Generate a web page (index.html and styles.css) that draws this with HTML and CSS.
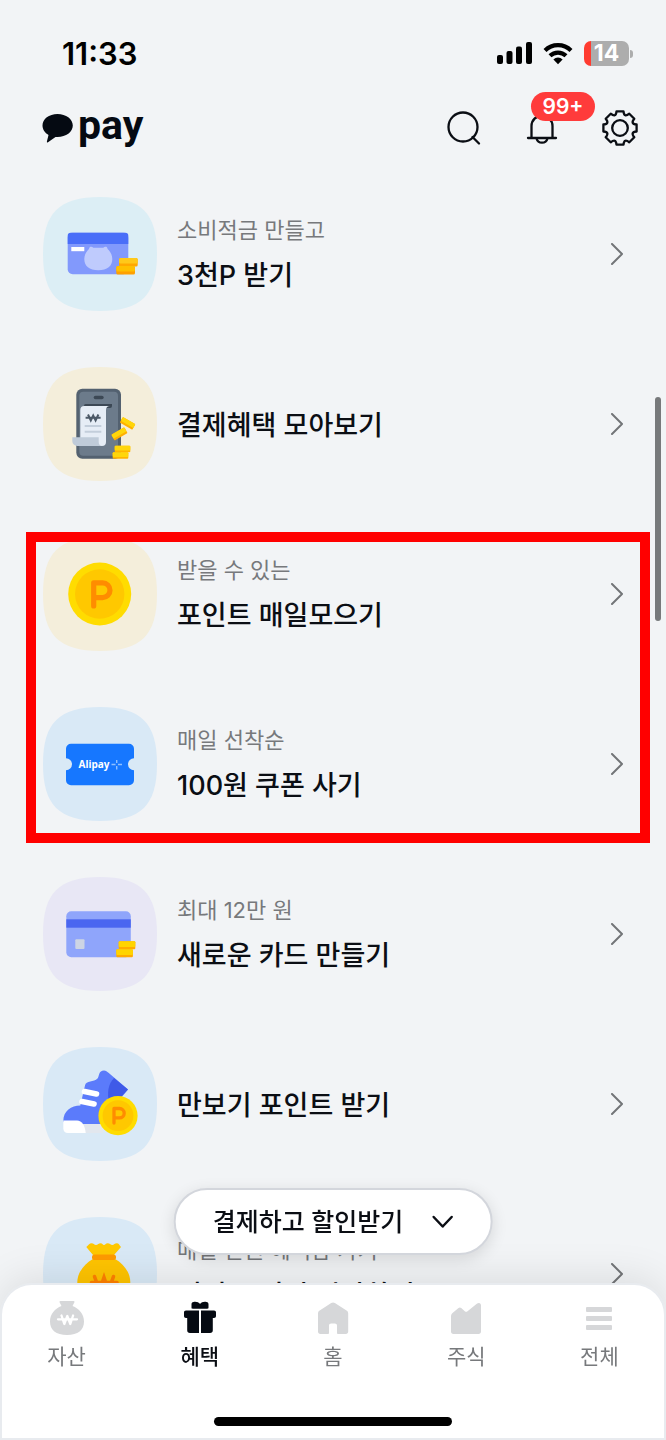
FILE: index.html
```html
<!DOCTYPE html>
<html lang="ko">
<head>
  <meta charset="utf-8">
  <meta name="viewport" content="width=device-width, initial-scale=1.0">
  <title>pay 혜택</title>
  <link rel="stylesheet" href="styles.css">
</head>
<body>
  <!-- shared shapes -->
  <svg class="defs" width="0" height="0" aria-hidden="true">
    <symbol id="tile" viewBox="0 0 114 114">
      <path d="M0 57C0 16 16 0 57 0s57 16 57 57-16 57-57 57S0 98 0 57z"/>
    </symbol>
    <symbol id="next" viewBox="0 0 14 22">
      <path d="M2 1l10 10L2 21" fill="none" stroke="#737578" stroke-width="2" stroke-linecap="round" stroke-linejoin="round"/>
    </symbol>
  </svg>

  <div class="status">
    <span class="time">11:33</span>
    <div class="status-icons">
      <svg width="35" height="24" viewBox="0 0 35 24">
        <rect x="0" y="14" width="6" height="9" rx="2"/>
        <rect x="9.500" y="10" width="6" height="13" rx="2"/>
        <rect x="19" y="5.500" width="6" height="17.500" rx="2"/>
        <rect x="29" y="1" width="6" height="22" rx="2"/>
      </svg>
      <svg width="30" height="24" viewBox="0 0 30 24">
        <g fill="none" stroke="#000" stroke-width="4.2">
          <path d="M2 9.400a18.500 18.500 0 0 1 26 0"/>
          <path d="M7 14.800a11.500 11.500 0 0 1 16 0"/>
        </g>
        <path d="M15 23.200l-4.600-4.800a6.600 6.600 0 0 1 9.200 0z"/>
      </svg>
      <span class="battery">14</span>
    </div>
  </div>

  <header class="header">
    <a class="logo" href="#">
      <svg width="31" height="31" viewBox="0 0 31 31">
        <path d="M15.500 1C7 1 .5 6 .5 12.500c0 4 2.400 7.400 6 9.400L4.900 28.600c-.2.900.4 1.200 1.100.7l7.500-5.400 2 .1c8.500 0 15.300-5 15.300-11.500S24 1 15.500 1z" fill="#050a12"/>
      </svg>
      <span>pay</span>
    </a>
    <div class="actions">
      <button type="button" aria-label="검색">
        <svg width="40" height="40" viewBox="0 0 40 40">
          <circle cx="19" cy="19" r="14.500"/>
          <path d="M28.500 29l6.500 6.500"/>
        </svg>
      </button>
      <button type="button" aria-label="알림">
        <svg width="40" height="40" viewBox="0 0 40 40">
          <path d="M6 30h28M9.500 30V18a10.500 10.500 0 0 1 21 0v12M14.500 30.500a5.700 5.700 0 0 0 11 0"/>
        </svg>
        <span class="badge">99+</span>
      </button>
      <button type="button" aria-label="설정">
        <svg width="40" height="40" viewBox="0 0 40 40">
          <path d="M16.500 3.400h7Q24.100 10 29.300 5.700l5 5Q30 15.900 36.600 16.500v7Q30 24.100 34.300 29.300l-5 5Q24.100 30 23.500 36.600h-7Q15.900 30 10.700 34.300l-5-5Q10 24.100 3.400 23.500v-7Q10 15.900 5.700 10.700l5-5Q15.900 10 16.500 3.400z"/>
          <circle cx="20" cy="20" r="7.800"/>
        </svg>
      </button>
    </div>
  </header>

  <main class="list">
    <a class="item" href="#">
      <svg class="icon" viewBox="0 0 114 114">
        <use href="#tile" fill="#dceef5"/>
        <rect x="24.700" y="35.700" width="60.600" height="41.600" rx="5" fill="#8299fc"/>
        <path d="M24.700 47v-8.300a3 3 0 0 1 3-3h54.600a3 3 0 0 1 3 3V47z" fill="#4a6ef8"/>
        <rect x="28.300" y="50" width="13" height="4.200" fill="#fff"/>
        <path d="M46 52c.3-3 3-2.600 4.300-1.300h10c1.300-1.300 4-1.700 4.300 1.300 2.800 2.600 4.700 6 4.700 10 0 7-5 11.300-14 11.300S41.300 69 41.300 62c0-4 1.900-7.400 4.700-10z" fill="#bfcbfd"/>
        <rect x="76" y="61" width="18.700" height="8.500" rx="1.500" fill="#ffa800"/>
        <rect x="76" y="61" width="18.700" height="5.500" rx="1.500" fill="#ffc91a"/>
        <rect x="73.300" y="69" width="18.700" height="8.500" rx="1.500" fill="#ffa000"/>
        <rect x="73.300" y="69" width="18.700" height="5.500" rx="1.500" fill="#ffc000"/>
      </svg>
      <div class="text">
        <span class="sub">소비적금 만들고</span>
        <strong class="title">3천P 받기</strong>
      </div>
      <svg class="next"><use href="#next"/></svg>
    </a>

    <a class="item" href="#">
      <svg class="icon" viewBox="0 0 114 114">
        <use href="#tile" fill="#f4eedb"/>
        <rect x="33.300" y="21.700" width="44.700" height="70" rx="6" fill="#536170"/>
        <rect x="36.300" y="24.700" width="38.700" height="64" rx="4" fill="#6c7b8b"/>
        <rect x="50.700" y="28.700" width="10" height="3.600" rx="1.800" fill="#3c4855"/>
        <path d="M41 38.500a1.600 1.600 0 0 1 1.600-1.600H69v2a2 2 0 0 1-2 2H42z" fill="#3c4855"/>
        <path d="M37.300 71V43a4 4 0 0 1 4-4H67c-2.500 0-4 1.500-4 4v32a4 4 0 0 1-4 4H37.300z" fill="#e6edf6"/>
        <path d="M29.300 70.300h26.400V75a4 4 0 0 0 4 4H34.300a5 5 0 0 1-5-5z" fill="#bfcbd9"/>
        <path d="M45 47.500l2.800 6 2.400-5 2.400 5 2.800-6M42.600 50.700h15" fill="none" stroke="#4c5967" stroke-width="2"/>
        <path d="M41.700 59h16.600M41.700 64.700h16.600" stroke="#c3cedb" stroke-width="2"/>
        <g transform="rotate(30 84.500 56)">
          <rect x="77.500" y="53" width="14.500" height="6.500" rx="1" fill="#ffb000"/>
          <rect x="77.500" y="53" width="14.500" height="4.400" rx="1" fill="#ffd60a"/>
        </g>
        <g transform="rotate(-30 76.500 67)">
          <rect x="69" y="63.500" width="15" height="6.800" rx="1" fill="#ffb000"/>
          <rect x="69" y="63.500" width="15" height="4.600" rx="1" fill="#ffd60a"/>
        </g>
        <rect x="71.700" y="78.700" width="15.600" height="6.600" rx="1" fill="#ffb400"/>
        <rect x="71.700" y="78.700" width="15.600" height="4.800" rx="1" fill="#ffd60a"/>
        <rect x="69.700" y="85.300" width="15.600" height="6.400" rx="1" fill="#ffb400"/>
        <rect x="69.700" y="85.300" width="15.600" height="4.800" rx="1" fill="#ffd60a"/>
      </svg>
      <div class="text">
        <strong class="title">결제혜택 모아보기</strong>
      </div>
      <svg class="next"><use href="#next"/></svg>
    </a>

    <div class="highlight">
      <a class="item" href="#">
        <svg class="icon" viewBox="0 0 114 114">
          <use href="#tile" fill="#f4eedb"/>
          <circle cx="56.700" cy="57" r="31.500" fill="#ffdc00"/>
          <circle cx="56.700" cy="57" r="24.700" fill="#ffc800"/>
          <path d="M50.700 69V45.800h8.900a7.400 7.400 0 0 1 0 14.800h-8.900" fill="none" stroke="#ff8c00" stroke-width="5.200" stroke-linecap="round" stroke-linejoin="round"/>
        </svg>
        <div class="text">
          <span class="sub">받을 수 있는</span>
          <strong class="title">포인트 매일모으기</strong>
        </div>
        <svg class="next"><use href="#next"/></svg>
      </a>

      <a class="item" href="#">
        <svg class="icon" viewBox="0 0 114 114">
          <use href="#tile" fill="#d9e9f6"/>
          <path d="M28 36.700h58a5 5 0 0 1 5 5v9.600a6 6 0 0 0 0 12v10a5 5 0 0 1-5 5H28a5 5 0 0 1-5-5v-10a6 6 0 0 0 0-12v-9.600a5 5 0 0 1 5-5z" fill="#1677ff"/>
          <text class="brand" x="35.500" y="61" fill="#fff">Alipay</text>
          <path d="M68.500 57.500h4M75 57.500h4M73.700 53v3M73.700 59v3.500" stroke="#8fc0ff" stroke-width="1.400"/>
        </svg>
        <div class="text">
          <span class="sub">매일 선착순</span>
          <strong class="title">100원 쿠폰 사기</strong>
        </div>
        <svg class="next"><use href="#next"/></svg>
      </a>
    </div>

    <a class="item" href="#">
      <svg class="icon" viewBox="0 0 114 114">
        <use href="#tile" fill="#e8e7f5"/>
        <rect x="23.300" y="34.300" width="64.500" height="46" rx="5" fill="#8fa5fb"/>
        <rect x="23.300" y="42.300" width="64.500" height="8.400" fill="#4a66f0"/>
        <rect x="32.300" y="62.300" width="9.200" height="9.600" rx="1" fill="#cdd5e4"/>
        <rect x="75.700" y="64.300" width="16.600" height="8" rx="1" fill="#ffab00"/>
        <rect x="75.700" y="64.300" width="16.600" height="5.600" rx="1" fill="#ffd400"/>
        <rect x="73.300" y="72.300" width="16.600" height="8" rx="1" fill="#ffab00"/>
        <rect x="73.300" y="72.300" width="16.600" height="5.600" rx="1" fill="#ffd400"/>
      </svg>
      <div class="text">
        <span class="sub">최대 12만 원</span>
        <strong class="title">새로운 카드 만들기</strong>
      </div>
      <svg class="next"><use href="#next"/></svg>
    </a>

    <a class="item" href="#">
      <svg class="icon" viewBox="0 0 114 114">
        <use href="#tile" fill="#d9e9f6"/>
        <path d="M38 77h22v9H38z" fill="#e2e7ee"/>
        <path d="M20.300 74c0-10 8-15.500 17-15.500L42 38.500c1-5.500 9-3 12.500-7 2-2.500 1-8 6.500-8 2 0 3 1 4.500 2.300L85 42.500 72 58 60 77H40L20.300 75z" fill="#5b7bfb"/>
        <path d="M71 31l14 11.500L77 51l-11 5c-2-10-1-19 5-25z" fill="#3f5ae8"/>
        <path d="M20.300 73.500H34c5 0 8 5 8.700 12.500H25c-3 0-4.700-1.700-4.700-4.700z" fill="#fff"/>
        <path d="M41.500 44.500l12 2.500M39 54.500l12 2.500" stroke="#fff" stroke-width="5.600" stroke-linecap="round"/>
        <circle cx="75" cy="68.700" r="19.600" fill="#ffdc00"/>
        <circle cx="75" cy="68.700" r="15.400" fill="#ffc800"/>
        <path d="M71 76V61.500h5.500a4.700 4.700 0 0 1 0 9.400H71" fill="none" stroke="#ff8c00" stroke-width="3.300" stroke-linecap="round" stroke-linejoin="round"/>
      </svg>
      <div class="text">
        <strong class="title">만보기 포인트 받기</strong>
      </div>
      <svg class="next"><use href="#next"/></svg>
    </a>

    <a class="item" href="#">
      <svg class="icon" viewBox="0 0 114 114">
        <use href="#tile" fill="#d9e9f6"/>
        <path d="M43.300 30c2-1.500 3-3.700 5.300-3.700 2 0 2.600 1.700 4.400 1.700s2.700-1.700 4.600-1.700S59.500 28 61 28s1.700-1.700 3.700-1.700S67.500 28 69.300 28s2.400-1.700 4.400-1.700c2.300 0 2.700 2.200 4.300 3.700L71 38H50z" fill="#ffc800"/>
        <path d="M50 42h22c9 5 15.300 14 15.300 23C87.300 82 78 92 61 92S34.300 82 34.300 65C34.300 56 41 47 50 42z" fill="#ffc400"/>
        <rect x="49" y="37.500" width="24" height="5.500" rx="2.500" fill="#ff9a00"/>
        <path d="M51.500 59.500l5 14 4.500-13 4.500 13 5-14M48.500 65.500h25.500" fill="none" stroke="#ff8000" stroke-width="3.600" stroke-linecap="round"/>
      </svg>
      <div class="text">
        <span class="sub">매일 만원 혜택함 가기</span>
        <strong class="title">머니 굴리기 시작하기</strong>
      </div>
      <svg class="next"><use href="#next"/></svg>
    </a>
  </main>

  <div class="scrollbar"></div>

  <button class="float-btn" type="button">
    결제하고 할인받기
    <svg width="22" height="14" viewBox="0 0 22 14">
      <path d="M2 2l9 9.500L20 2" fill="none" stroke="#0b0e14" stroke-width="2.500" stroke-linecap="round" stroke-linejoin="round"/>
    </svg>
  </button>

  <nav class="tabs">
    <div class="tab-list">
      <a class="tab" href="#">
        <svg width="34" height="34" viewBox="0 0 34 34">
          <path d="M10.500 0h13c1 0 1.300.8.800 1.600L22.500 5C29 7.500 34 13 34 20.500 34 29 28 34 17 34S0 29 0 20.500C0 13 5 7.500 11.500 5L9.700 1.600C9.200.8 9.500 0 10.500 0z"/>
          <path d="M11.500 14.500l2.800 8.500 3-8 3 8 2.800-8.500M8 18.300h19" fill="none" stroke="#fff" stroke-width="2.300" stroke-linecap="round" stroke-linejoin="round"/>
        </svg>
        자산
      </a>
      <a class="tab active" href="#">
        <svg width="34" height="34" viewBox="0 0 34 34">
          <path d="M10.500 1c3-.6 5 .4 6.500 2 1.500-1.600 3.500-2.600 6.500-2 1.500.3 2 1 2 2.500v3c0 .8-.4 1.200-1.200 1.200H9.700c-.8 0-1.200-.4-1.200-1.200v-3c0-1.500.5-2.200 2-2.500z"/>
          <path d="M3 9.500h13V32H7c-1.800 0-2.800-1-2.800-2.800V17H3c-1.300 0-2-.7-2-2v-3.500c0-1.300.7-2 2-2zM18 9.500h13c1.300 0 2 .7 2 2V15c0 1.300-.7 2-2 2h-1.200v12.200c0 1.800-1 2.800-2.800 2.800h-9z"/>
        </svg>
        혜택
      </a>
      <a class="tab" href="#">
        <svg width="34" height="34" viewBox="0 0 34 34">
          <path d="M15.200 2c1.300-.8 2.400-.8 3.700 0L30.500 9.500c1.200.8 1.700 1.700 1.700 3.100v18c0 1.500-.9 2.400-2.400 2.400h-7.600c-.8 0-1.200-.4-1.200-1.200v-7c0-1.400-.8-2.200-2.200-2.200h-3.600c-1.400 0-2.200.8-2.200 2.200v7c0 .8-.4 1.200-1.200 1.200H4.400C2.900 33 2 32.100 2 30.600v-18c0-1.400.5-2.300 1.700-3.100z"/>
        </svg>
        홈
      </a>
      <a class="tab" href="#">
        <svg width="34" height="34" viewBox="0 0 34 34">
          <path d="M3.500 12l6-5c.9-.7 1.800-.7 2.700 0l3.600 3.200c1 .8 1.800.8 2.700 0l9.300-7.400C30 1.200 32 2.100 32 4.500v26c0 1.600-.9 2.500-2.500 2.500h-25C2.900 33 2 32.100 2 30.500v-15C2 14 2.500 12.900 3.500 12z"/>
        </svg>
        주식
      </a>
      <a class="tab" href="#">
        <svg width="34" height="34" viewBox="0 0 34 34">
          <rect x="4" y="6" width="26" height="5" rx="1"/>
          <rect x="4" y="15" width="26" height="5" rx="1"/>
          <rect x="4" y="24" width="26" height="5" rx="1"/>
        </svg>
        전체
      </a>
    </div>
    <div class="home-bar"></div>
  </nav>
</body>
</html>
```
FILE: styles.css
```css
*, *:before, *:after {
  box-sizing: border-box;
}
body {
  position: relative;
  margin: 0;
  height: 100vh;
  overflow: hidden;
  background: #f2f4f6;
  color: #0b0e14;
  font-family: Inter, "Noto Sans CJK KR", sans-serif;
}
a {
  color: inherit;
  text-decoration: none;
}
button {
  padding: 0;
  border: none;
  background: none;
  color: inherit;
  font-family: inherit;
  cursor: pointer;
}
svg {
  display: block;
  flex: none;
}
.defs {
  position: absolute;
}

/* status bar */
.status {
  display: flex;
  align-items: center;
  justify-content: space-between;
  height: 92px;
  padding: 14px 33px 0 62px;
  color: #000;
}
.time {
  font-size: 31px;
  font-weight: 600;
}
.status-icons {
  display: flex;
  align-items: center;
  gap: 11px;
}
.battery {
  position: relative;
  width: 45px;
  height: 25px;
  margin-right: 4px;
  border-radius: 7px;
  background: linear-gradient(to right, #ff3b30 7px, #adadad 7px);
  color: #fff;
  font-size: 23px;
  font-weight: 700;
  line-height: 25px;
  text-align: center;
}
.battery:after {
  content: "";
  position: absolute;
  top: 9px;
  right: -4px;
  width: 3px;
  height: 8px;
  border-radius: 0 3px 3px 0;
  background: #adadad;
}

/* header */
.header {
  display: flex;
  align-items: center;
  justify-content: space-between;
  height: 70px;
  padding: 2px 26px 0 42px;
}
.logo {
  display: flex;
  align-items: center;
  gap: 5px;
  color: #050a12;
  font-family: Roboto, sans-serif;
  font-size: 41px;
  font-weight: 700;
  line-height: 48px;
}
.logo span {
  padding-bottom: 6px;
}
.actions {
  display: flex;
  gap: 38px;
}
.actions button {
  position: relative;
  width: 40px;
  height: 40px;
}
.actions svg {
  fill: none;
  stroke: #0b0e14;
  stroke-width: 2.3;
  stroke-linecap: round;
  stroke-linejoin: round;
}
.badge {
  position: absolute;
  top: -16px;
  left: 9px;
  width: 64px;
  height: 29px;
  border-radius: 15px;
  background: #ff3b3b;
  color: #fff;
  font-size: 21px;
  font-weight: 600;
  line-height: 29px;
}

/* benefit list */
.list {
  display: flex;
  flex-direction: column;
  gap: 56px;
  padding-top: 35px;
}
.item {
  display: flex;
  align-items: center;
  gap: 20px;
  padding: 0 42px 0 43px;
}
.icon {
  width: 114px;
  height: 114px;
}
.brand {
  font-family: "Noto Sans", sans-serif;
  font-size: 10px;
  font-weight: 700;
}
.text {
  display: flex;
  flex: 1;
  flex-direction: column;
  gap: 12px;
  padding-top: 4px;
}
.sub {
  color: #77797c;
  font-size: 22px;
  line-height: 28px;
}
.title {
  font-size: 27px;
  font-weight: 500;
  line-height: 40px;
}
.next {
  width: 14px;
  height: 22px;
}
.highlight {
  position: relative;
  display: flex;
  flex-direction: column;
  gap: 56px;
}
.highlight:after {
  content: "";
  position: absolute;
  top: -5px;
  right: 16px;
  bottom: -22px;
  left: 26px;
  border: 10px solid #ff0000;
  pointer-events: none;
}
.scrollbar {
  position: absolute;
  top: 397px;
  right: 5px;
  width: 6px;
  height: 224px;
  border-radius: 3px;
  background: #77797b;
}

/* floating button */
.float-btn {
  position: fixed;
  bottom: 185px;
  left: 50%;
  z-index: 2;
  display: flex;
  align-items: center;
  gap: 28px;
  height: 67px;
  padding: 0 37px 4px;
  transform: translateX(-50%);
  border: 2px solid #d3d6dc;
  border-radius: 34px;
  background: #fff;
  box-shadow: 0 4px 16px rgba(0, 0, 0, 0.12);
  font-size: 25px;
  font-weight: 500;
  white-space: nowrap;
}
.float-btn svg {
  margin-top: 4px;
}

/* bottom tabs */
.tabs {
  position: fixed;
  right: 2px;
  bottom: 2px;
  left: 2px;
  height: 153px;
  padding-top: 16px;
  border-radius: 30px 30px 0 0;
  background: #fff;
  box-shadow: 0 0 0 2px #e8ebef, 0 -6px 40px rgba(0, 0, 0, 0.1);
}
.tab-list {
  display: grid;
  grid-template-columns: repeat(5, 1fr);
  margin: 0 -2px;
}
.tab {
  display: flex;
  flex-direction: column;
  align-items: center;
  gap: 8px;
  color: #77797c;
  font-size: 21px;
  line-height: 28px;
}
.tab svg {
  fill: #d6d7d9;
}
.tab.active {
  color: #0b0e14;
  font-weight: 500;
}
.tab.active svg {
  fill: #050a12;
}
.home-bar {
  width: 238px;
  height: 9px;
  margin: 46px auto 0;
  border-radius: 5px;
  background: #000;
}
```
